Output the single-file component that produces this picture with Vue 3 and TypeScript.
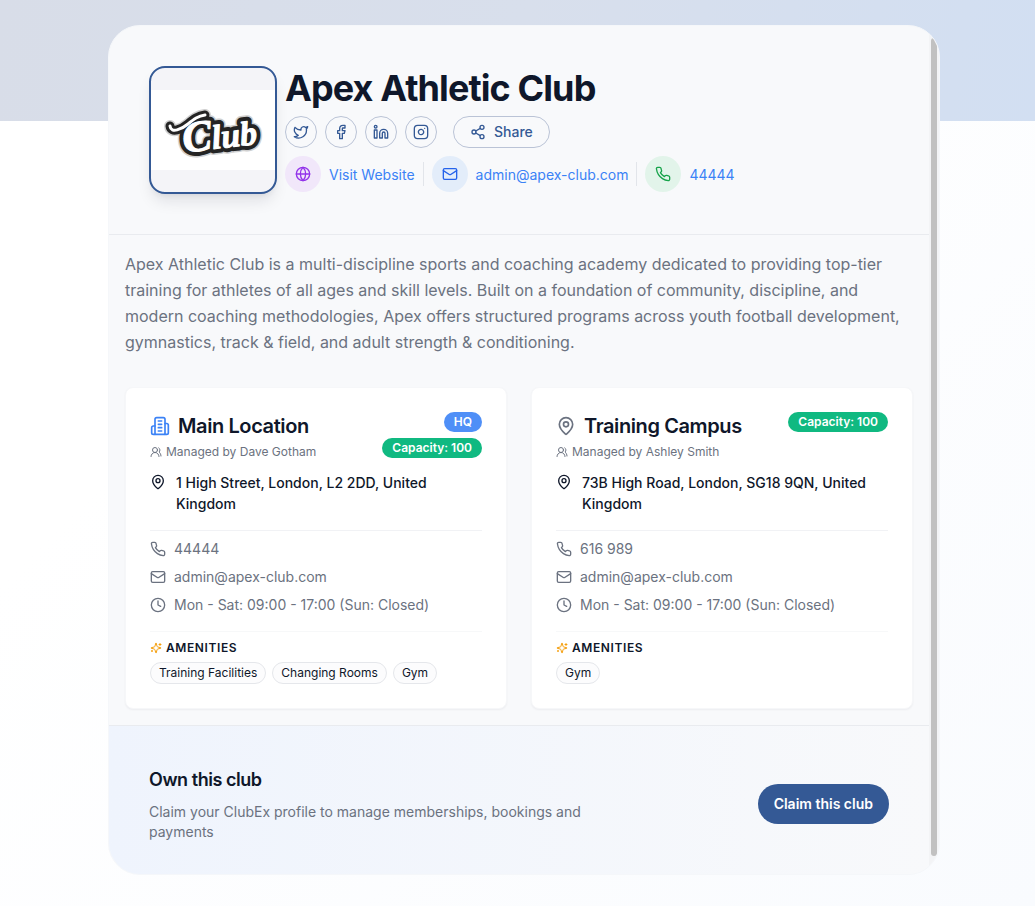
<script setup lang="ts">
interface Shape {
  tag: 'path' | 'circle' | 'rect' | 'line' | 'ellipse'
  [attribute: string]: string | number
}

const icons: Record<string, Shape[]> = {
  twitter: [
    { tag: 'path', d: 'M22 4s-.7 2.1-2 3.4c1.6 10-9.4 17.3-18 11.6 2.2.1 4.4-.6 6-2C3 15.5.5 9.6 3 5c2.2 2.6 5.6 4.1 9 4-.9-4.2 4-6.6 7-3.8 1.1 0 3-1.2 3-1.2z' },
  ],
  facebook: [{ tag: 'path', d: 'M18 2h-3a5 5 0 0 0-5 5v3H7v4h3v8h4v-8h3l1-4h-4V7a1 1 0 0 1 1-1h3z' }],
  linkedin: [
    { tag: 'path', d: 'M16 8a6 6 0 0 1 6 6v7h-4v-7a2 2 0 0 0-2-2 2 2 0 0 0-2 2v7h-4v-7a6 6 0 0 1 6-6z' },
    { tag: 'rect', width: 4, height: 12, x: 2, y: 9 },
    { tag: 'circle', cx: 4, cy: 4, r: 2 },
  ],
  instagram: [
    { tag: 'rect', width: 20, height: 20, x: 2, y: 2, rx: 5 },
    { tag: 'path', d: 'M16 11.37A4 4 0 1 1 12.63 8 4 4 0 0 1 16 11.37z' },
    { tag: 'line', x1: 17.5, x2: 17.51, y1: 6.5, y2: 6.5 },
  ],
  share: [
    { tag: 'circle', cx: 18, cy: 5, r: 3 },
    { tag: 'circle', cx: 6, cy: 12, r: 3 },
    { tag: 'circle', cx: 18, cy: 19, r: 3 },
    { tag: 'line', x1: 8.59, x2: 15.42, y1: 13.51, y2: 17.49 },
    { tag: 'line', x1: 15.41, x2: 8.59, y1: 6.51, y2: 10.49 },
  ],
  globe: [
    { tag: 'circle', cx: 12, cy: 12, r: 10 },
    { tag: 'path', d: 'M12 2a14.5 14.5 0 0 0 0 20 14.5 14.5 0 0 0 0-20' },
    { tag: 'path', d: 'M2 12h20' },
  ],
  mail: [
    { tag: 'rect', width: 20, height: 16, x: 2, y: 4, rx: 2 },
    { tag: 'path', d: 'm22 7-8.97 5.7a1.94 1.94 0 0 1-2.06 0L2 7' },
  ],
  phone: [
    { tag: 'path', d: 'M22 16.92v3a2 2 0 0 1-2.18 2 19.79 19.79 0 0 1-8.63-3.07 19.5 19.5 0 0 1-6-6 19.79 19.79 0 0 1-3.07-8.67A2 2 0 0 1 4.11 2h3a2 2 0 0 1 2 1.72 12.84 12.84 0 0 0 .7 2.81 2 2 0 0 1-.45 2.11L8.09 9.91a16 16 0 0 0 6 6l1.27-1.27a2 2 0 0 1 2.11-.45 12.84 12.84 0 0 0 2.81.7A2 2 0 0 1 22 16.92z' },
  ],
  building: [
    { tag: 'path', d: 'M6 22V4a2 2 0 0 1 2-2h8a2 2 0 0 1 2 2v18Z' },
    { tag: 'path', d: 'M6 12H4a2 2 0 0 0-2 2v6a2 2 0 0 0 2 2h2' },
    { tag: 'path', d: 'M18 9h2a2 2 0 0 1 2 2v9a2 2 0 0 1-2 2h-2' },
    { tag: 'path', d: 'M10 6h4M10 10h4M10 14h4M10 18h4' },
  ],
  pin: [
    { tag: 'path', d: 'M20 10c0 4.993-5.539 10.193-7.399 11.799a1 1 0 0 1-1.202 0C9.539 20.193 4 14.993 4 10a8 8 0 0 1 16 0' },
    { tag: 'circle', cx: 12, cy: 10, r: 3 },
  ],
  users: [
    { tag: 'path', d: 'M18 21a8 8 0 0 0-16 0' },
    { tag: 'circle', cx: 10, cy: 8, r: 5 },
    { tag: 'path', d: 'M22 20c0-3.37-2-6.5-4-8a5 5 0 0 0-.45-8.3' },
  ],
  clock: [
    { tag: 'circle', cx: 12, cy: 12, r: 10 },
    { tag: 'path', d: 'M12 6v6l4 2' },
  ],
  sparkles: [
    { tag: 'path', d: 'M9.937 15.5A2 2 0 0 0 8.5 14.063l-6.135-1.582a.5.5 0 0 1 0-.962L8.5 9.936A2 2 0 0 0 9.937 8.5l1.582-6.135a.5.5 0 0 1 .963 0L14.063 8.5A2 2 0 0 0 15.5 9.937l6.135 1.581a.5.5 0 0 1 0 .964L15.5 14.063a2 2 0 0 0-1.437 1.437l-1.582 6.135a.5.5 0 0 1-.963 0z' },
    { tag: 'path', d: 'M20 3v4M22 5h-4M4 17v2M5 18H3' },
  ],
}

const Icon = (props: { name: string }) =>
  h(
    'svg',
    { viewBox: '0 0 24 24', class: 'icon', 'aria-hidden': 'true' },
    icons[props.name].map(({ tag, ...attributes }) => h(tag, attributes)),
  )
Icon.props = ['name']

const logoLayers = ['halo', 'ink', 'face']

const socials = [
  { icon: 'twitter', label: 'Twitter' },
  { icon: 'facebook', label: 'Facebook' },
  { icon: 'linkedin', label: 'LinkedIn' },
  { icon: 'instagram', label: 'Instagram' },
]

const contacts = [
  { icon: 'globe', tone: 'purple', text: 'Visit Website', href: '#website' },
  { icon: 'mail', tone: 'blue', text: 'admin@apex-club.com', href: 'mailto:admin@apex-club.com' },
  { icon: 'phone', tone: 'green', text: '44444', href: 'tel:44444' },
]

const locations = [
  {
    name: 'Main Location',
    hq: true,
    manager: 'Dave Gotham',
    capacity: 100,
    address: '1 High Street, London, L2 2DD, United Kingdom',
    phone: '44444',
    amenities: ['Training Facilities', 'Changing Rooms', 'Gym'],
  },
  {
    name: 'Training Campus',
    hq: false,
    manager: 'Ashley Smith',
    capacity: 100,
    address: '73B High Road, London, SG18 9QN, United Kingdom',
    phone: '616 989',
    amenities: ['Gym'],
  },
]
</script>

<script lang="ts">
import { h } from 'vue'
</script>

<template>
  <div class="page">
    <main class="panel">
      <div class="content">
        <header class="club-header">
          <div class="logo">
            <svg class="logo-art" viewBox="0 0 124 80" role="img" aria-label="Club logo">
              <g v-for="layer in logoLayers" :key="layer" :class="layer">
                <path d="M19 36C20 44 31 39 37 34S47 26 54 25" />
                <text x="31" y="59" transform="rotate(-7 62 45)"><tspan class="initial">C</tspan><tspan>lub</tspan></text>
              </g>
            </svg>
          </div>
          <div class="identity">
            <h1>Apex Athletic Club</h1>
            <div class="socials">
              <a v-for="s in socials" :key="s.icon" class="social" :href="'#' + s.icon" :aria-label="s.label">
                <Icon :name="s.icon" />
              </a>
              <button class="share" type="button"><Icon name="share" />Share</button>
            </div>
            <div class="contacts">
              <a v-for="c in contacts" :key="c.icon" class="contact" :href="c.href">
                <span class="bubble" :class="c.tone"><Icon :name="c.icon" /></span>
                <span class="contact-text">{{ c.text }}</span>
              </a>
            </div>
          </div>
        </header>

        <section class="about">
          <p>
            Apex Athletic Club is a multi-discipline sports and coaching academy dedicated to providing top-tier
            training for athletes of all ages and skill levels. Built on a foundation of community, discipline, and
            modern coaching methodologies, Apex offers structured programs across youth football development,
            gymnastics, track &amp; field, and adult strength &amp; conditioning.
          </p>
          <div class="locations">
            <article v-for="l in locations" :key="l.name" class="location">
              <div class="location-head">
                <div>
                  <h2 :class="{ hq: l.hq }"><Icon :name="l.hq ? 'building' : 'pin'" />{{ l.name }}</h2>
                  <p class="manager"><Icon name="users" />Managed by {{ l.manager }}</p>
                </div>
                <div class="badges">
                  <span v-if="l.hq" class="badge badge-hq">HQ</span>
                  <span class="badge">Capacity: {{ l.capacity }}</span>
                </div>
              </div>
              <div class="address"><Icon name="pin" /><span>{{ l.address }}</span></div>
              <ul class="details">
                <li><Icon name="phone" />{{ l.phone }}</li>
                <li><Icon name="mail" />admin@apex-club.com</li>
                <li><Icon name="clock" />Mon - Sat: 09:00 - 17:00 (Sun: Closed)</li>
              </ul>
              <div class="amenities">
                <h3><Icon name="sparkles" />Amenities</h3>
                <ul>
                  <li v-for="a in l.amenities" :key="a">{{ a }}</li>
                </ul>
              </div>
            </article>
          </div>
        </section>

        <footer class="claim">
          <div class="claim-text">
            <h2>Own this club</h2>
            <p>Claim your ClubEx profile to manage memberships, bookings and payments</p>
          </div>
          <button type="button">Claim this club</button>
        </footer>
      </div>
      <div class="track" aria-hidden="true"><div class="thumb"></div></div>
    </main>
  </div>
</template>

<style>
body {
  margin: 0;
  background: #fff;
}
</style>

<style scoped>
* {
  box-sizing: border-box;
}
h1, h2, h3, p, ul {
  margin: 0;
  padding: 0;
}
ul {
  list-style: none;
}
a {
  text-decoration: none;
}
button {
  font: inherit;
  cursor: pointer;
}
.page {
  min-height: 100vh;
  padding: 25px 95px 31px 108px;
  font-family: Inter, "Liberation Sans", sans-serif;
  font-size: 14px;
  line-height: 20px;
  color: #0f172a;
  background:
    linear-gradient(100deg, #d8dde8 0%, #d8dfec 50%, #d2dff2 100%) top / 100% 121px no-repeat,
    linear-gradient(135deg, #ffffff 30%, #f9fbfe 100%);
}
:deep(.icon) {
  display: block;
  flex: none;
  width: 16px;
  height: 16px;
  fill: none;
  stroke: currentColor;
  stroke-width: 2;
  stroke-linecap: round;
  stroke-linejoin: round;
}
.panel {
  display: flex;
  overflow: hidden;
  border: 1px solid #f5f7fa;
  border-radius: 32px;
  background: #f8f9fb;
}
.content {
  flex: 1;
  min-width: 0;
}
.track {
  display: flex;
  width: 10px;
  padding: 12px 2px 18px;
  background: #f3f4f6;
}
.thumb {
  flex: 1;
  border-radius: 3px;
  background: #c1c1c1;
}
.club-header {
  display: flex;
  align-items: center;
  gap: 8px;
  padding: 40px;
  border-bottom: 1px solid #e9ebef;
}
.logo {
  display: flex;
  align-items: center;
  flex: none;
  width: 128px;
  height: 128px;
  overflow: hidden;
  border: 2px solid #345995;
  border-radius: 16px;
  background: #f4f4f8;
  box-shadow: 0 10px 15px -3px rgba(15, 23, 42, 0.1), 0 4px 6px -4px rgba(15, 23, 42, 0.1);
}
.logo-art {
  display: block;
  width: 100%;
  background: #fff;
}
.logo-art text {
  font-family: "Liberation Serif", serif;
  font-size: 34px;
  font-style: italic;
  font-weight: 700;
}
.logo-art .initial {
  font-size: 44px;
}
.logo-art g {
  stroke-linejoin: round;
  stroke-linecap: round;
}
.logo-art path {
  fill: none;
}
.halo {
  fill: #d0d0d0;
  stroke: #d0d0d0;
  stroke-width: 12;
}
.ink {
  fill: #242424;
  stroke: #242424;
  stroke-width: 9;
}
.face {
  fill: #fff;
  stroke: #fff;
  stroke-width: 3;
}
.face text {
  stroke-width: 1;
}
.identity {
  display: grid;
  gap: 8px;
}
h1 {
  font-size: 36px;
  line-height: 40px;
  font-weight: 700;
  letter-spacing: -0.025em;
}
.socials {
  display: flex;
  gap: 8px;
}
.social, .share {
  display: flex;
  align-items: center;
  justify-content: center;
  width: 32px;
  height: 32px;
  border: 1px solid #bac3d6;
  border-radius: 16px;
  color: #345995;
  background: #f8f9fb;
}
.share {
  gap: 8px;
  width: auto;
  margin-left: 8px;
  padding: 0 16px;
  font-weight: 500;
}
.contacts {
  display: flex;
  align-items: center;
}
.contact {
  display: flex;
  align-items: center;
  gap: 8px;
  color: #3b82f6;
}
.contact-text {
  padding-top: 2px;
}
.contact + .contact::before {
  content: "";
  width: 1px;
  height: 24px;
  margin-left: 8px;
  background: #e2e5ea;
}
.bubble {
  display: flex;
  align-items: center;
  justify-content: center;
  width: 36px;
  height: 36px;
  border-radius: 50%;
}
.purple {
  color: #9333ea;
  background: #f1e7fa;
}
.blue {
  color: #2563eb;
  background: #e3edfa;
}
.green {
  color: #16a34a;
  background: #e2f4ea;
}
.about {
  display: grid;
  gap: 32px;
  padding: 16px;
}
.about > p {
  font-size: 16px;
  line-height: 26px;
  color: #6b7280;
}
.locations {
  display: grid;
  grid-template-columns: 1fr 1fr;
  gap: 24px;
}
.location {
  padding: 24px;
  border: 1px solid #f6f7f9;
  border-radius: 8px;
  background: #fff;
  box-shadow: 0 1px 2px rgba(15, 23, 42, 0.05);
}
.location-head {
  display: flex;
  justify-content: space-between;
  align-items: flex-start;
  gap: 8px;
}
.location h2 {
  display: flex;
  align-items: center;
  gap: 8px;
  font-size: 20px;
  line-height: 28px;
  font-weight: 600;
  letter-spacing: -0.02em;
}
.location h2 :deep(.icon) {
  width: 20px;
  height: 20px;
  color: #6b7280;
}
.location h2.hq :deep(.icon) {
  color: #3b82f6;
}
.manager {
  display: flex;
  align-items: center;
  gap: 4px;
  margin-top: 4px;
  font-size: 12px;
  line-height: 16px;
  color: #6b7280;
}
.manager :deep(.icon), h3 :deep(.icon) {
  width: 12px;
  height: 12px;
}
.badges {
  display: flex;
  flex-direction: column;
  align-items: flex-end;
  gap: 6px;
}
.badge {
  padding: 2px 10px;
  border-radius: 10px;
  font-size: 12px;
  line-height: 16px;
  font-weight: 600;
  color: #fff;
  background: #10b981;
}
.badge-hq {
  background: #4f8ff7;
}
.address {
  display: flex;
  gap: 10px;
  margin-top: 12px;
  padding-bottom: 16px;
  border-bottom: 1px solid #f1f2f5;
  line-height: 21px;
  font-weight: 500;
}
.address :deep(.icon) {
  margin-top: 2px;
}
.details {
  display: grid;
  gap: 8px;
  padding: 8px 0 16px;
  border-bottom: 1px solid #f7f8f9;
  color: #6b7280;
}
.details li {
  display: flex;
  align-items: center;
  gap: 8px;
}
.amenities {
  padding-top: 8px;
}
h3 {
  display: flex;
  align-items: center;
  gap: 4px;
  font-size: 12px;
  line-height: 16px;
  font-weight: 600;
  letter-spacing: 0.05em;
  text-transform: uppercase;
}
h3 :deep(.icon) {
  color: #f59e0b;
}
.amenities ul {
  display: flex;
  flex-wrap: wrap;
  gap: 6px;
  margin-top: 6px;
}
.amenities li {
  padding: 2px 8px;
  border: 1px solid #e5e7eb;
  border-radius: 11px;
  font-size: 12px;
  line-height: 16px;
  background: #fcfcfd;
}
.claim {
  display: flex;
  align-items: center;
  justify-content: space-between;
  gap: 24px;
  padding: 40px 40px 32px;
  border-top: 1px solid #e9ebef;
  background: linear-gradient(90deg, #eff4fd, #f8f9fb);
}
.claim-text {
  max-width: 448px;
}
.claim h2 {
  font-size: 18px;
  line-height: 28px;
  font-weight: 600;
  letter-spacing: -0.025em;
}
.claim p {
  margin-top: 8px;
  color: #6b7280;
}
.claim button {
  flex: none;
  height: 40px;
  padding: 0 16px;
  border: 0;
  border-radius: 20px;
  font-weight: 600;
  color: #fff;
  background: #345995;
}
</style>
